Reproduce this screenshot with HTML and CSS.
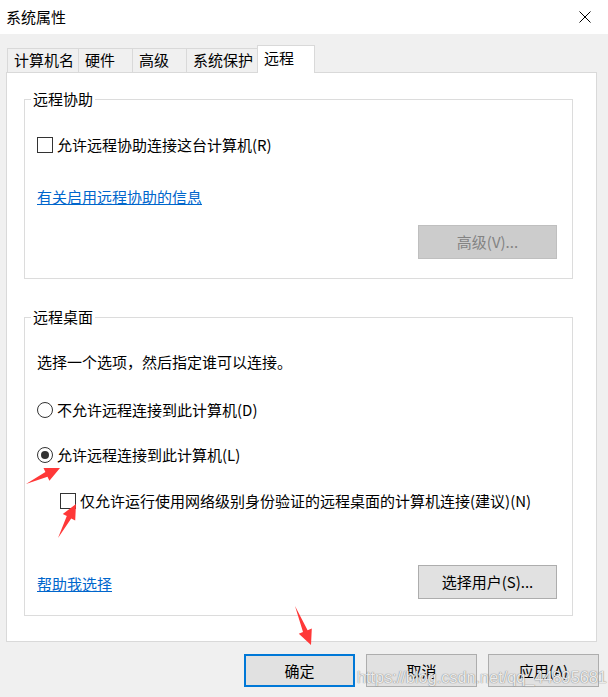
FILE: index.html
```html
<!DOCTYPE html>
<html lang="zh-CN">
<head>
<meta charset="utf-8">
<title>系统属性</title>
<link rel="stylesheet" href="styles.css">
</head>
<body>
<div class="window">
  <div class="titlebar">
    <span class="title">系统属性</span>
    <svg class="close" width="12" height="12" viewBox="0 0 12 12"><path d="M0.5 0.5 L11.5 11.5 M11.5 0.5 L0.5 11.5" stroke="#000" stroke-width="1" fill="none"/></svg>
  </div>
  <div class="content">
    <div class="tabs">
      <div class="tab">计算机名</div>
      <div class="tab">硬件</div>
      <div class="tab">高级</div>
      <div class="tab">系统保护</div>
      <div class="tab active">远程</div>
    </div>
    <div class="panel">
      <fieldset class="group group-assist">
        <legend>远程协助</legend>
        <div class="row check-row first"><span class="checkbox"></span><span>允许远程协助连接这台计算机(R)</span></div>
        <a class="link link-info" href="#">有关启用远程协助的信息</a>
        <div class="btn-row"><button class="btn disabled">高级(V)...</button></div>
      </fieldset>
      <fieldset class="group group-desktop">
        <legend>远程桌面</legend>
        <div class="row intro">选择一个选项，然后指定谁可以连接。</div>
        <div class="row radio-row r1"><span class="radio"></span><span>不允许远程连接到此计算机(D)</span></div>
        <div class="row radio-row r2"><span class="radio checked"></span><span>允许远程连接到此计算机(L)</span></div>
        <div class="row check-row nla"><span class="checkbox"></span><span>仅允许运行使用网络级别身份验证的远程桌面的计算机连接(建议)(N)</span></div>
        <div class="bottom-row">
          <a class="link" href="#">帮助我选择</a>
          <button class="btn">选择用户(S)...</button>
        </div>
      </fieldset>
    </div>
    <div class="footer">
      <button class="btn dlg default">确定</button>
      <button class="btn dlg">取消</button>
      <button class="btn dlg">应用(A)</button>
    </div>
  </div>
  <svg class="annotations" width="608" height="697" viewBox="0 0 608 697">
    <polygon points="26,484 45.4,472.1 43.5,468.1 60,468 49.4,480.7 47.5,476.7" fill="#ff3838"/>
    <polygon points="58,538 66.8,516.1 62.8,514.0 76,504 75.2,520.5 71.2,518.4" fill="#ff3838"/>
    <polygon points="295,606 307.6,630.2 311.8,628.4 311,645 298.8,633.8 303.0,632.1" fill="#ff3838"/>
  </svg>
  <div class="watermark">https://blog.csdn.net/qq_44895681</div>
</div>
</body>
</html>
```

FILE: styles.css
```css
* { box-sizing: border-box; }
html, body { margin: 0; padding: 0; }
body {
  width: 608px;
  height: 697px;
  background: #f0f0f0;
  font-family: "Noto Sans CJK SC", "Microsoft YaHei", sans-serif;
  font-size: 15px;
  color: #000;
  overflow: hidden;
}
.window { position: relative; width: 608px; height: 697px; }
.titlebar {
  height: 34px;
  background: #fff;
  display: flex;
  align-items: center;
  justify-content: space-between;
  padding: 0 17px 0 6px;
}
.title { line-height: 20px; }
.close { display: block; }
.content { padding: 11px 11px 0 6px; }
.tabs {
  display: flex;
  align-items: flex-end;
  padding-left: 1px;
  height: 27px;
}
.tab {
  height: 24px;
  line-height: 22px;
  min-width: 55px;
  padding: 0 4px 0 6px;
  border: 1px solid #d9d9d9;
  border-bottom: none;
  background: #f0f0f0;
  margin-right: -1px;
  white-space: nowrap;
}
.tab.active {
  position: relative;
  z-index: 1;
  height: 28px;
  line-height: 24px;
  min-width: 58px;
  background: #fff;
  margin-bottom: -1px;
  margin-left: 0;
}
.panel {
  background: #fff;
  border: 1px solid #d9d9d9;
  padding: 16px 23px 25px 17px;
}
.group {
  margin: 0;
  padding: 0 15px 0 12px;
  border: 1px solid #dcdcdc;
  min-inline-size: 0;
}
.group legend {
  margin-left: -6px;
  padding: 0 2px;
  line-height: 20px;
  height: 20px;
}
.group-assist { padding-bottom: 19px; }
.group-desktop { margin-top: 28px; padding-bottom: 16px; }
.row {
  display: flex;
  align-items: center;
  height: 20px;
  line-height: 20px;
  white-space: nowrap;
}
.check-row.first { margin-top: 26px; }
.checkbox {
  width: 16px;
  height: 16px;
  border: 1px solid #333;
  background: #fff;
  margin-right: 4px;
  flex: none;
}
.radio {
  width: 16px;
  height: 16px;
  border: 1px solid #333;
  border-radius: 50%;
  background: #fff;
  margin-right: 4px;
  flex: none;
  display: flex;
  align-items: center;
  justify-content: center;
}
.radio.checked::after {
  content: "";
  width: 8px;
  height: 8px;
  border-radius: 50%;
  background: #333;
}
.link {
  color: #0066cc;
  text-decoration: underline;
  line-height: 20px;
  display: block;
  width: fit-content;
}
.link-info { margin-top: 32px; }
.btn-row { display: flex; justify-content: flex-end; margin-top: 18px; }
.btn {
  font-family: inherit;
  font-size: 15px;
  width: 139px;
  height: 34px;
  background: #e1e1e1;
  border: 1px solid #adadad;
  color: #000;
  padding: 0;
  margin: 0;
  line-height: 20px;
}
.btn.disabled {
  background: #cccccc;
  border-color: #bfbfbf;
  color: #838383;
}
.intro { margin-top: 25px; }
.r1 { margin-top: 28px; }
.r2 { margin-top: 25px; }
.nla { margin-top: 26px; margin-left: 23px; }
.bottom-row {
  margin-top: 54px;
  display: flex;
  align-items: center;
  justify-content: space-between;
  height: 34px;
}
.bottom-row .link { margin-top: 4px; }
.footer {
  display: flex;
  justify-content: flex-end;
  gap: 11px;
  margin-top: 12px;
  margin-right: -2px;
}
.btn.dlg { width: 111px; height: 33px; }
.btn.default { border: 2px solid #0078d7; }
.annotations {
  position: absolute;
  left: 0;
  top: 0;
  pointer-events: none;
}
.watermark {
  position: absolute;
  left: 357px;
  top: 666px;
  font-family: "Liberation Sans", Arial, sans-serif;
  font-size: 16.3px;
  line-height: 22px;
  color: rgba(255, 255, 255, 0.85);
  text-shadow: 0 0 1px rgba(110, 110, 110, 0.8), 0 0 1px rgba(110, 110, 110, 0.6);
  white-space: nowrap;
  pointer-events: none;
}
```
